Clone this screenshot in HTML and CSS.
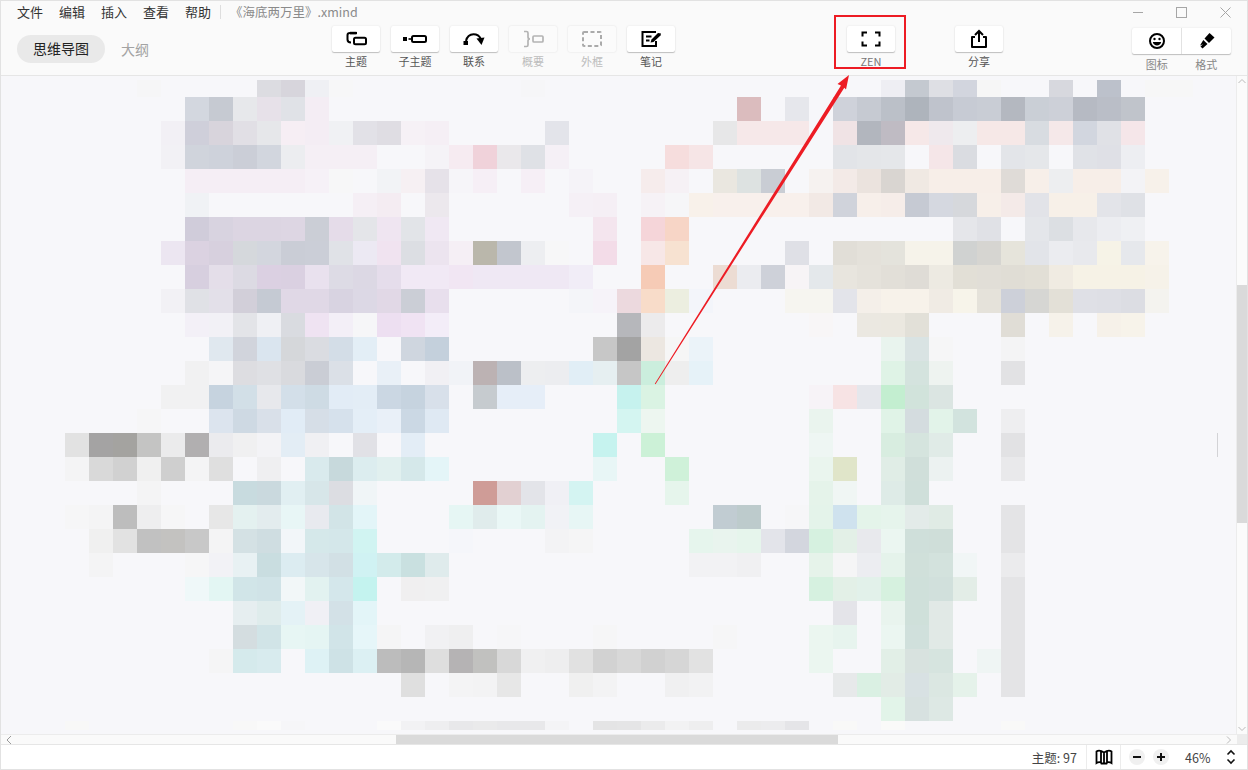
FILE: index.html
```html
<!DOCTYPE html>
<html lang="zh-CN">
<head>
<meta charset="utf-8">
<title>《海底两万里》.xmind</title>
<link rel="stylesheet" href="styles.css">
</head>
<body>
<div class="window">
  <header class="header">
    <div class="left">
      <nav class="menu">
        <span>文件</span><span>编辑</span><span>插入</span><span>查看</span><span>帮助</span>
        <i class="menu-sep"></i>
        <span class="doc">《海底两万里》.xmind</span>
      </nav>
      <div class="tabs"><span class="tab on">思维导图</span><span class="tab">大纲</span></div>
    </div>

    <div class="tools">
      <div class="tool"><div class="btn"><svg width="24" height="18" viewBox="0 0 24 18"><path d="M6 3H13M6 3C4.200 3 3.500 3.800 3.500 5V9.500C3.500 11 4.500 12.500 7 12.500" fill="none" stroke="#000" stroke-width="2"/><rect x="6" y="1.800" width="6.500" height="2.600"/><rect x="10" y="7.800" width="12" height="6.400" rx="1.500" fill="none" stroke="#000" stroke-width="2"/></svg></div><span>主题</span></div>
      <div class="tool"><div class="btn"><svg width="26" height="18" viewBox="0 0 26 18"><rect x="1" y="7" width="4" height="4"/><rect x="6.500" y="8.200" width="3" height="1.600"/><rect x="10" y="6" width="14" height="6" rx="1.500" fill="none" stroke="#000" stroke-width="2"/></svg></div><span>子主题</span></div>
      <div class="tool"><div class="btn"><svg width="24" height="18" viewBox="0 0 24 18"><rect x="1.500" y="11" width="4.500" height="4"/><path d="M4 11C5 6.500 8 4.200 11.500 4.200C15 4.200 17.500 6 18.800 9" fill="none" stroke="#000" stroke-width="2"/><path d="M14.500 8.500L22.500 7.500L19.500 15Z"/></svg></div><span>联系</span></div>
      <div class="tool off"><div class="btn"><svg width="24" height="18" viewBox="0 0 24 18"><path d="M3 1.500H5.500C6.500 1.500 7 2 7 3V7C7 8 7.500 9 9 9C7.500 9 7 10 7 11V15C7 16 6.500 16.500 5.500 16.500H3" fill="none" stroke="#b4b4b4" stroke-width="1.700"/><rect x="12" y="6" width="10" height="6" rx="1" fill="none" stroke="#b4b4b4" stroke-width="1.700"/></svg></div><span>概要</span></div>
      <div class="tool off"><div class="btn"><svg width="24" height="18" viewBox="0 0 24 18"><rect x="3" y="2" width="18" height="14" rx="1" fill="none" stroke="#aaa" stroke-width="2" stroke-dasharray="4 2.500"/></svg></div><span>外框</span></div>
      <div class="tool"><div class="btn"><svg width="24" height="18" viewBox="0 0 24 18"><path d="M17 2H3.500V16H17V11" fill="none" stroke="#000" stroke-width="2"/><path d="M7 6.500H12.500M7 10.500H10.500" stroke="#000" stroke-width="2"/><path d="M11.500 12.500L12.500 9.500L19 3L22 3.500L21.500 5.500L14.500 12Z"/></svg></div><span>笔记</span></div>
    </div>

    <div class="tool zen"><div class="btn"><svg width="24" height="18" viewBox="0 0 24 18"><path d="M8 2.500H3.500V6.500M16 2.500H20.500V6.500M3.500 11.500V15.500H8M20.500 11.500V15.500H16" fill="none" stroke="#000" stroke-width="2"/></svg></div><span>ZEN</span></div>

    <div class="tool share"><div class="btn"><svg width="20" height="20" viewBox="0 0 20 20"><path d="M6 8H3V18H17V8H14" fill="none" stroke="#000" stroke-width="2" stroke-linejoin="round"/><path d="M10 13V2.500M6 6L10 2L14 6" fill="none" stroke="#000" stroke-width="2"/></svg></div><span>分享</span></div>

    <div class="right">
      <div class="winctl">
        <svg width="10" height="11" viewBox="0 0 10 11"><path d="M0 5.500H10" stroke="#a6a6a6"/></svg>
        <svg width="11" height="11" viewBox="0 0 11 11"><rect x=".5" y=".5" width="10" height="10" fill="none" stroke="#a6a6a6"/></svg>
        <svg width="11" height="11" viewBox="0 0 11 11"><path d="M.5 .5L10.500 10.500M10.500 .5L.5 10.500" stroke="#a6a6a6"/></svg>
      </div>
      <div class="pair">
        <div class="pair-btns">
          <div class="half"><svg width="18" height="18" viewBox="0 0 18 18"><circle cx="9" cy="9" r="7" fill="none" stroke="#000" stroke-width="2"/><circle cx="6.500" cy="7" r="1.200"/><circle cx="11.500" cy="7" r="1.200"/><path d="M4.800 10H13.200C12.800 12.300 11 13.500 9 13.500C7 13.500 5.200 12.300 4.800 10Z"/></svg></div>
          <div class="half"><svg width="18" height="18" viewBox="0 0 18 18"><path d="M6.500 6.500L11.500 1L16.500 5.500L11 11Z"/><path d="M5.300 8L9.500 12L4.500 16.500L2.500 14.500L5 12.200L2 13.500Z"/></svg></div>
        </div>
        <div class="pair-labels"><span>图标</span><span>格式</span></div>
      </div>
    </div>
    <div class="highlight"></div>
  </header>

  <div class="middle">
    <main class="canvas">
      <div class="mosaic" id="mosaic"></div>
      <div class="mini"></div>
    </main>
    <div class="vbar">
      <svg class="va" width="10" height="8" viewBox="0 0 10 8"><path d="M1.500 6L5 2.500L8.500 6" fill="none" stroke="#bbb"/></svg>
      <div class="vthumb"></div>
      <svg class="va" width="10" height="8" viewBox="0 0 10 8"><path d="M1.500 2L5 5.500L8.500 2" fill="none" stroke="#bbb"/></svg>
    </div>
  </div>

  <div class="hbar">
    <svg class="ha" width="8" height="10" viewBox="0 0 8 10"><path d="M6 1L2 5L6 9" fill="none" stroke="#999"/></svg>
    <div class="htrack"><div class="hthumb"></div></div>
    <svg class="ha" width="8" height="10" viewBox="0 0 8 10"><path d="M2 1.500L5.500 5L2 8.500" fill="none" stroke="#bbb"/></svg>
    <div class="corner"></div>
  </div>

  <footer class="status">
    <span class="count">主题: 97</span>
    <div class="mapcell"><svg width="18" height="16" viewBox="0 0 18 16"><path d="M1.500 2.500C3.500 1 6 1.500 9 3.500C12 1.500 14.500 1 16.500 2.500V14C14.500 12.700 12 12.700 11.500 14.500H6.500C6 12.700 3.500 12.700 1.500 14ZM6 2.500V14M12 2.500V14M9 3.500V14" fill="none" stroke="#000" stroke-width="1.800"/></svg></div>
    <div class="zoomcell">
      <span class="circle"><svg width="10" height="10" viewBox="0 0 10 10"><path d="M1 5H9" stroke="#111" stroke-width="2"/></svg></span>
      <span class="circle"><svg width="10" height="10" viewBox="0 0 10 10"><path d="M1 5H9M5 1V9" stroke="#111" stroke-width="2"/></svg></span>
      <span class="pct">46%</span>
      <svg width="10" height="16" viewBox="0 0 10 16"><path d="M1.500 5.500L5 2L8.500 5.500M1.500 10.500L5 14L8.500 10.500" fill="none" stroke="#111" stroke-width="1.600"/></svg>
    </div>
  </footer>

  <svg class="arrow" width="220" height="340" viewBox="640 60 220 340"><polygon points="654.800,383.800 841,85.500 837.500,84 849,75 846,89.500 844.300,87.700 655.500,384.200" fill="#ed1c24"/></svg>
</div>
<script src="script.js"></script>
</body>
</html>
```
FILE: styles.css
```css
* { box-sizing: border-box; }
html, body { margin: 0; height: 100%; overflow: hidden; }
body { font-family: "Noto Sans CJK SC", "Noto Sans", sans-serif; color: #222; background: #fff; }

.window {
  position: relative;
  width: 1248px;
  height: 770px;
  display: flex;
  flex-direction: column;
  border: 1px solid #e2e2e2;
}

.header {
  position: relative;
  flex: none;
  height: 75px;
  display: flex;
  align-items: flex-start;
  background: #fafafa;
  border-bottom: 1px solid #e6e6e6;
}

.left { width: 331px; flex: none; padding-left: 16px; }
.menu { display: flex; align-items: center; gap: 16px; height: 22px; font-size: 13px; line-height: 22px; color: #333; white-space: nowrap; width: 320px; }
.menu span { flex: none; }
.menu-sep { flex: none; width: 1px; height: 14px; background: #dedede; margin-left: -7px; margin-right: -7px; }
.doc { color: #8a8a8a; font-size: 12.500px; }
.tabs { display: flex; align-items: center; gap: 16px; margin-top: 12px; font-size: 14px; }
.tab { color: #a3a3a3; line-height: 27px; }
.tab.on { width: 88px; height: 28px; text-align: center; color: #222; background: #e9e9e9; border-radius: 14px; }

.tools { display: flex; gap: 11px; flex: none; }
.tool { width: 48px; padding-top: 25px; display: flex; flex-direction: column; align-items: center; flex: none; }
.tool span { margin-top: 2px; font-size: 11px; line-height: 14px; color: #555; white-space: nowrap; }
.btn {
  width: 48px;
  height: 26px;
  display: flex;
  align-items: center;
  justify-content: center;
  background: #fff;
  border-radius: 2px;
  box-shadow: 0 1px 1px rgba(0,0,0,.22), 0 0 2px rgba(0,0,0,.1);
}
.tool.off .btn { background: #fbfbfb; box-shadow: 0 0 2px rgba(0,0,0,.12); }
.tool.off span { color: #bdbdbd; }
.zen { margin-left: 172px; }
.zen span { color: #777; }
.share { margin-left: 60px; }

.right { margin-left: auto; width: 115px; padding-right: 16px; display: flex; flex-direction: column; align-items: flex-end; flex: none; }
.winctl { display: flex; align-items: flex-start; gap: 33px; height: 27px; padding-top: 6px; }
.pair { width: 99px; }
.pair-btns { display: flex; height: 26px; background: #fff; border-radius: 2px; box-shadow: 0 1px 1px rgba(0,0,0,.22), 0 0 2px rgba(0,0,0,.1); }
.half { flex: 1; display: flex; align-items: center; justify-content: center; }
.half + .half { border-left: 1px solid #e2e2e2; }
.pair-labels { display: flex; margin-top: 3px; }
.pair-labels span { flex: 1; text-align: center; font-size: 11px; line-height: 14px; color: #888; }

.highlight { position: absolute; left: 833px; top: 14px; width: 72px; height: 54px; border: 2px solid #ed1c24; }

.middle { flex: 1; min-height: 0; display: flex; }
.canvas { position: relative; flex: 1; background: #f7f7fa; overflow: hidden; }
.mosaic {
  display: grid;
  grid-template-columns: repeat(47, 24px);
  grid-template-rows: 17px repeat(26, 24px) 9px;
  padding: 4px 0 0 64px;
}
.mosaic i { display: block; }
.mini { position: absolute; left: 1216px; top: 357px; width: 1px; height: 24px; background: #d3d3d6; }

.vbar { width: 11px; flex: none; display: flex; flex-direction: column; align-items: center; background: #fbfbfb; border-left: 1px solid #ececec; padding-top: 1px; position: relative; }
.vbar .va { position: relative; z-index: 1; }
.vbar .va:last-child { margin-top: auto; margin-bottom: 1px; }
.vthumb { position: absolute; left: 0; top: 209px; width: 10px; height: 238px; background: #dadada; }

.hbar { flex: none; display: flex; align-items: center; background: #fafafa; border-top: 1px solid #ececec; border-bottom: 1px solid #e6e6e6; box-sizing: content-box; height: 9px; }
.ha { flex: none; margin-left: 4px; }
.htrack { flex: 1; height: 100%; padding-left: 383px; }
.hthumb { width: 442px; height: 100%; background: #dadada; }
.hbar .ha + .htrack + .ha { margin-right: 4px; }
.corner { width: 10px; height: 100%; background: #ececec; flex: none; }

.status { flex: none; height: 24px; display: flex; align-items: center; justify-content: flex-end; background: #fff; font-size: 13px; color: #444; }
.count { padding-right: 9px; white-space: nowrap; font-size: 12.500px; }
.mapcell { width: 35px; height: 100%; display: flex; align-items: center; justify-content: center; border-left: 1px solid #ececec; border-right: 1px solid #ececec; }
.zoomcell { width: 126px; display: flex; align-items: center; padding-left: 8px; gap: 8px; }
.circle { width: 16px; height: 16px; border-radius: 50%; background: #f0f0f0; display: flex; align-items: center; justify-content: center; }
.pct { margin-left: 8px; margin-right: 8px; font-size: 12.500px; }

.arrow { position: absolute; left: 639px; top: 59px; pointer-events: none; }
```
FILE: script.js
```js
var rows = [
 "@3 f6f6f7 @8 dcdce1 d7d5dc eff0f4 f7f7f8 @19 f6f6f8 @34 eeeef3 c4c9d0 dedfe4 d2d5de f6f6f6 @41 d7d8de @43 bcc1cb @45 f7f7f7 f7f7f7",
 "@5 d3d7df c6cad2 e7e8eb e7e1e9 e0e2e7 f4edf4 @28 dbbcbe @30 e6e7ec @32 cfd2da c6cad2 bbc0c8 aeb4bc bfc3cc c7cbd4 c9cdd5 b4b8c0 cacfd6 cdd0d8 b6bac3 babec7 c0c4cb",
 "@4 f2f0f5 cfcfda d8d4dc e1dfe5 e6e7ea f6eef4 f4edf4 f0f1f4 e2e1e7 dfdde3 f6f1f6 f5eff5 @20 e3e4ea @27 e7e7e8 f6e8e9 f6e8e9 f6e8e9 @32 f0e3e5 b2b6be bfbbc3 f6e8e8 efe9ed edeef0 f6e8e7 f6e8e7 d8dce1 f5e8e9 d2d6df e0e1e6 f5e6e9",
 "@4 f2f1f5 d0d4dc ced2db cbced7 d2d6de ecedf0 f5eff5 f5eff5 f5eff5 @15 f5f3f7 f6ebf1 f0d2da eae8eb dfe1e6 f5f0f6 @25 f6dddd f6e5e6 @32 e2e4e8 e4e6e9 e5e7ea @36 f5e6e8 dadce1 @39 e3e5e9 e5e7ea @42 e0e2e7 dfe0e6 edeef2",
 "@5 f5eef5 f5eef5 f5eef5 f5eef5 f5eef5 f6f1f7 f7f7f8 @13 f2f3f6 f6f0f3 e6e2e9 f6f5f9 f6eff6 @19 f6eff6 @21 f5f3f8 @24 f6ecec f6f1f5 @27 eae7e0 dde2e1 c9cdd4 @31 f6f2f0 f3eae7 ebe3de d9d5d1 f0e9e3 f7eee8 f7eee8 f7eee8 dfdbd7 f7efe9 edeef0 f7eee8 f7eee8 f3f3f6 f7f1ea",
 "@5 f0f2f5 @12 f5eff5 f4ecf2 @15 ece8ed @21 f5f0f6 f5eff5 @24 f6f2f6 f6f6f8 f8f1ea f8f0ec f8f0ec f8f0ec f8f0ec f2e9e5 d0d3db f7efea f6ede9 c6cad3 d5d8e0 d6d8dc f7efe9 f4eae8 e2e3e8 f7f0e8 f7f0e8 e3e4e9 dfe1e6",
 "@5 d0ccda d8d3e0 dcd5e2 dcd5e2 ddd6e3 cbced6 e5dce9 e4e5e9 efe5f1 e2e4e8 f0e8f3 @22 f4e5ee @24 f5d5d9 f7d5c6 @37 e5e6ea e0e1e6 @40 e4e6ea dcdfe3 e7e8ec ecedf1 eff0f3",
 "@4 ece6f1 dbd2e1 d7d0de d5d8dc d3d6de cacdd6 cbced7 e0e2e7 ece9f3 f0e3f0 dcdee3 ece4ef f5eff5 bab7ab c2c6ce edeef1 f7f7f8 @22 f3dce8 @24 f7e7e7 f7e2d1 @30 dfe0e6 @32 e1ded7 e4e1da e4e3dc f6f3ea f6f3ea d0d2d1 d6d5d1 e6e4db e2e4e9 ebecf0 e8e9ed f6f3e7 e6e8ec f7f3eb",
 "@5 d7cfdf e4dee9 dcdae3 dbd0e2 dad0e1 e9e1ee dddbe5 dcd8e4 e5ddeb f1e9f5 f1e9f5 f1e6f3 efe8f4 efe8f4 efe8f4 efe8f4 f1edf7 @24 f6cbb6 @27 ecdcd3 ebecf0 ced1d9 f7f4f6 e4e8eb e8e5de e5e2db e2dfd8 dfdcd6 edeae2 e2dfd6 e1ded7 e0ddd5 e2dfd6 f0ebe2 f6f2e6 f6f2e6 f6f2e6 f6f2e9",
 "@4 f2f1f5 e0e1e6 e3e0e9 d2cfd9 c5cad3 e0d8e6 e0d8e6 d8d3e1 dcd8e5 e1d8e6 cbced6 e8dfed @21 f4f5f9 f6f3f9 ecd9de f8dcc9 eceee0 f3f5fa @30 f6f5f0 f6f5f0 e3e4ea f4efe9 f7f2ea f7f2ea f0ebe4 f7f4ea e5e2da cdd0d9 d6d6d3 e3e0d7 dfe0e6 dedfe5 dcdde3 f4f3ef",
 "@5 f3f0f7 f2f1f6 e3e4e8 eff0f4 d9dbe0 efe3f2 f3eff7 f6f6f8 eddff1 f0e3f3 f3edf8 @23 b6b7bb ecebec @31 f8f6f7 @33 ebe8e1 ebe8e0 e2e0d8 @39 e0ddd6 @41 f6f2ea @43 f6f1e9 f7f3ea",
 "@6 e0e8ef d1d4dc dae5ef d5d7da dadce1 d3dde7 e3eef6 @14 cfd6df c4d0dc @22 c7c7c7 a3a3a3 ece7e1 f6f6f6 ebf3f9 @34 e9f4ee d9e3e3 f6f6f7 @39 f4f4f5",
 "@5 f1f1f2 f5f5f7 dddde1 dfe0e4 d9dade cacdd5 dbe0e7 @13 e9f0f7 @15 f1f0f4 f1f3f7 bcb2b3 bbc0c8 edeef0 ecedf0 e1eef6 e6eff1 c6c6c6 cbeedd eeeeee e6f2f8 @34 dff3e6 d4e3de eef3f0 @39 e2e2e4",
 "@4 f1f1f2 f1f1f2 c6d3df d2dfe7 e7e8ec d3dfe9 cedbe4 e2ecf6 e3edf6 cbd7e3 c6d3df d8e0ea @17 c6cbcf e6eef8 e6eef8 @23 c6f2ee daf3e3 @31 f7f3f7 f7e3e4 e5e7ec c3eed0 d1e3db dbe5e2",
 "@3 f6f6f7 @6 dce4ee ced9e3 d9e0e9 e1ecf6 d6dee7 d6e1ec e4eef7 e9f0f8 cbd8e4 dfe9f3 @23 d4f5f1 edf6f0 @31 eaf4ee @34 e0f3e7 d4dcdf e2f3e9 d2e3de @39 eeeef0",
 "e2e2e2 a4a3a3 a4a3a0 c4c4c3 ebebec b1afb0 ebebee f0f0f1 f3f3f6 e3edf5 f0f0f3 @12 e1e1e6 @14 e3edf6 @22 c6f3ef @24 ccf1d7 @31 eef6f3 @34 d8ede0 d5e4de e0ebe7 @39 e2e2e4",
 "f4f4f5 d9d9d9 d1d1d1 f0f0f0 cfcfcf f4f4f5 dfdfdf @8 efeff1 @10 d9eaed c7d9dc dcedef e1f0ef d5e8ea e4f5f8 @22 e8f6f6 @25 cff1d9 @31 eaf5ee e0e5c9 @34 e0ede6 d0dfda ecf2f1 @39 e9e9eb",
 "@3 f4f4f5 @7 c8dbdf cad9de e1eff2 d7e6e9 dcdde2 f0f5f7 @17 cf9c97 e2d0d2 e3e4e9 f0f0f5 d4f4f2 @25 e6f5ec @31 e5f3ea f0f6f4 @34 deebe7 cfdfda",
 "f6f6f7 f4f4f5 bdbdbd eeeeef f6f6f7 @6 e7e7e7 e4f1f0 e3ecee e8f6f6 e8eaef d2e4e7 e3f5f8 @16 e6f6f4 e0ecec eaf7f6 e4f3f1 f1f2f6 e7f6f5 @27 c1ccd2 bdcbcc @30 f6f6f8 e4f3ea cfe2ee e4f4ea e6f4ec e3ebe9 e0ebe5 @39 e4e4e6",
 "@1 f0f0f0 e2e2e2 c1c1c1 c3c2c0 c8c8c8 f4f4f5 d4e1e4 cfdde1 f2f6f9 d5e8ea d4e7ea d1f4f2 @16 f5f6fa @20 f3f3f5 f5f5f6 @26 e6f5ed e9f4ee e6f5ec e3e4ea d3d6de d6f1e0 e3f0e7 e8e9ed ebf6f1 cfdfda cfded9 @39 e4e4e6",
 "@1 f4f4f5 @5 f6f6f7 f2f2f6 e8f1f3 c9dde0 dcecf1 d7e5ea d2e0e5 d0f2f3 d3ebeb c9e0e0 dfebec @26 f2f2f4 f2f2f4 f0f0f2 @31 e6f3ea f5f5f6 ecedf1 e5f3eb d0e0da d3e2dd f1f6f6 @39 ebebed",
 "@5 eff8f9 e3f6f3 d1e5e8 d0e3e7 f2f7f8 e2f2f0 d4e7eb c4f3ef @14 f0eff0 f0f0f1 @31 d6f1e0 e3f0e7 e2f1ea d6f1df cfe0da d1e0dc e3ede7 @39 e4e4e6",
 "@7 e6eef0 dfecec e4f2f6 f0f0f5 d3e1e7 e3f5f8 @32 e4e4e9 @34 e9f4ee cfe0da e1e9e6 @39 e4e4e6",
 "@7 d4dde0 d1e4e7 e7f6f4 e5f5f3 d1e4e8 e6f6f9 f5f5f6 @15 f1f1f3 efeff0 @18 f6f6f8 @22 f6f6f7 @27 f6f6f7 @31 ebf6f0 e7f4ee @34 ebf6f1 d0e0dc e1e9e6 @39 e4e4e6",
 "@6 f5f5f6 d5eaec d8ebee @10 def2f5 cee2e6 dcf0f3 bcbcbc b6b6b6 dedede b5b3b4 c1c1bf d8d8d8 f0f0f1 eeeeef e1e1e1 d2d2d2 d8d8d8 d1d1d1 d6d6d6 e2e2e2 @31 ebf6f0 @34 e2efe7 d8e2df d6e4df @38 eff5f4 e4e4e6",
 "@14 dfdfdf @16 f4f4f5 f3f3f4 e7e7e7 @21 f0f0f0 f3f3f4 @25 f0f0f1 f2f2f3 @32 e7e9ea daf0e3 e2ece6 d8e1e3 dbe7e2 e5f2ea @39 e4e4e6",
 "@34 e2f4e9 d7e1e0 dde8e4",
 "f8f8f7 @7 f8f8f8 fafafa f6f6f8 @13 fafafa f2f2f4 eeeef0 e8e8ea eaeaeb e8e8ea e8e8ea f4f4f6 @22 e4e4e5 e5e5e6 ebebec f2f2f3 eeeeef @28 ebebec ececee e5e5e8 @32 f9f9f8 @34 fafaf9 @39 f9f9f8"
];

var mosaic = document.getElementById("mosaic");
rows.forEach(function (row, r) {
  var col = 0;
  row.split(" ").forEach(function (tok) {
    if (tok.charAt(0) === "@") { col = parseInt(tok.slice(1), 10); return; }
    var cell = document.createElement("i");
    cell.style.gridColumn = String(col + 1);
    cell.style.gridRow = String(r + 1);
    cell.style.background = "#" + tok;
    mosaic.appendChild(cell);
    col++;
  });
});
```
